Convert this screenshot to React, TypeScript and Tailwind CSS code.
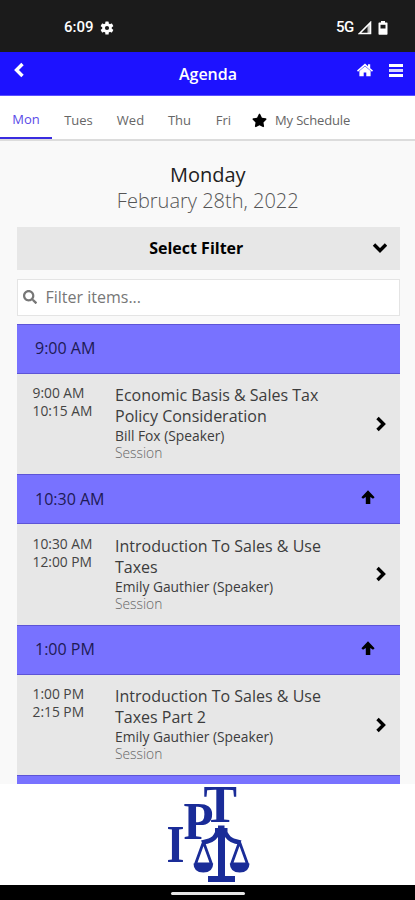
import { FaSearch, FaStar } from "react-icons/fa"

const days = [
  { label: "Mon", className: "w-[52px] border-b-2 border-[#3a2ce0] text-[#5a4ae8]" },
  { label: "Tues", className: "w-[53px] text-[#666]" },
  { label: "Wed", className: "w-[51px] text-[#666]" },
  { label: "Thu", className: "w-[47px] text-[#666]" },
  { label: "Fri", className: "w-[41px] text-[#666]" },
]

const sessions = [
  {
    start: "9:00 AM",
    end: "10:15 AM",
    title: ["Economic Basis & Sales Tax", "Policy Consideration"],
    speaker: "Bill Fox (Speaker)",
  },
  {
    start: "10:30 AM",
    end: "12:00 PM",
    title: ["Introduction To Sales & Use", "Taxes"],
    speaker: "Emily Gauthier (Speaker)",
  },
  {
    start: "1:00 PM",
    end: "2:15 PM",
    title: ["Introduction To Sales & Use", "Taxes Part 2"],
    speaker: "Emily Gauthier (Speaker)",
  },
]

function Chevron({ className, width = 3.6 }: { className: string; width?: number }) {
  return (
    <svg viewBox="0 0 16 16" className={className} fill="none" stroke="currentColor" strokeWidth={width}>
      <path d="M4.5 2 L10.5 8 L4.5 14" />
    </svg>
  )
}

function ArrowUp() {
  return (
    <svg viewBox="0 0 14 15" className="h-[15px] w-[14px]" fill="currentColor">
      <path d="M7 0.2 L13.6 7.2 L12 8.8 L9.3 7 V14 H4.8 V7 L2 8.8 L0.4 7.2 Z" />
    </svg>
  )
}

function HomeIcon() {
  return (
    <svg viewBox="0 0 16 14" className="h-[14px] w-4" fill="currentColor">
      <path d="M8 0.6 L11 3.3 V1.3 H13.2 V5.2 L16 7.6 L15 8.8 L8 2.8 L1 8.8 L0 7.6 Z" />
      <path d="M8 3.3 L13.6 8.1 V13.2 H9.3 V9.6 H6.7 V13.2 H2.4 V8.1 Z" />
    </svg>
  )
}

function GearIcon() {
  return (
    <svg viewBox="-7 -7 14 14" className="h-[14px] w-[14px]">
      <g fill="white">
        <rect x="-1.7" y="-6.5" width="3.4" height="13" rx="0.6" />
        <rect x="-1.7" y="-6.5" width="3.4" height="13" rx="0.6" transform="rotate(60)" />
        <rect x="-1.7" y="-6.5" width="3.4" height="13" rx="0.6" transform="rotate(120)" />
        <circle r="4.8" />
      </g>
      <circle r="2.1" fill="#1b1b1b" />
    </svg>
  )
}

function StatusBar() {
  return (
    <div className="flex h-[52px] shrink-0 items-center justify-between bg-[#1b1b1b] pt-[3px] pr-[27px] pl-16 text-white">
      <div className="flex items-center gap-[6px]">
        <span className="w-[30px] font-['Roboto'] text-[15px] font-medium">6:09</span>
        <GearIcon />
      </div>
      <div className="flex items-center">
        <span className="mr-[2px] w-5 font-['Roboto'] text-[15px] font-medium tracking-[-0.5px]">5G</span>
        <svg viewBox="0 0 14 14" className="mr-[6px] h-[14px] w-[14px]">
          <path d="M1.5 12.5 L12.5 1.5 V12.5 Z" fill="none" stroke="white" strokeWidth="1.6" />
          <path d="M9.5 5 L13 1 V13 H9.5 Z" fill="white" opacity="0.7" />
        </svg>
        <svg viewBox="0 0 10 14" className="h-[14px] w-[10px]">
          <path d="M3 0 H7 V1.5 H9 Q9.5 1.5 9.5 2.2 V13 Q9.5 13.8 8.8 13.8 H1.2 Q0.5 13.8 0.5 13 V2.2 Q0.5 1.5 1.2 1.5 H3 Z" fill="white" />
          <path d="M2.5 3.8 H7.5 V7.5 H2.5 Z" fill="#1b1b1b" />
        </svg>
      </div>
    </div>
  )
}

function Logo() {
  return (
    <svg viewBox="0 0 90 100" className="h-[100px] w-[90px] overflow-visible" fill="#1a2c98">
      <g fontFamily="Liberation Serif, serif" fontSize="53" fontWeight="bold">
        <text x="2.5" y="78" textLength="18" lengthAdjust="spacingAndGlyphs">I</text>
        <text x="19.5" y="54.5" textLength="30" lengthAdjust="spacingAndGlyphs">P</text>
        <text x="39.5" y="38" textLength="33.5" lengthAdjust="spacingAndGlyphs">T</text>
      </g>
      {/* Scales of justice */}
      <path d="M54 44 V41.5 H60.5 V44 H63.5 V48 Q66 53 70 54.5 L77.5 56.5 L75.5 60.5 Q66 60 61 53 V92 H71 V98 H44 V92 H54 V53 Q49 60 39 60.5 L37 56.5 L44.5 54.5 Q49 53 51 48 V44 Z" />
      <g fill="none" stroke="#1a2c98" strokeWidth="2.8" strokeLinejoin="round">
        <path d="M39.5 58 L31.5 80 H47.5 Z" />
        <path d="M75.5 58 L67.5 80 H83.5 Z" />
      </g>
      <path d="M29.5 79.5 H49.2 Q49 88.5 39.3 88.5 Q29.5 88.5 29.5 79.5 Z" />
      <path d="M65.8 79.5 H85.5 Q85.3 88.5 75.7 88.5 Q66 88.5 65.8 79.5 Z" />
    </svg>
  )
}

export default function App() {
  return (
    <div className="flex h-[900px] w-[415px] flex-col overflow-hidden bg-[#f9f9f9] font-['Open_Sans',sans-serif]">
      <StatusBar />

      {/* Header */}
      <header className="flex h-11 shrink-0 items-start justify-between border-b border-[#5a50ff] bg-[#1d12ff] text-white">
        <div className="w-[70px] pt-[9px] pl-[11px]">
          <Chevron className="h-[18px] w-4 rotate-180" width={3.4} />
        </div>
        <h1 className="pt-[10px] pl-px text-[16px] leading-6 font-semibold">Agenda</h1>
        <div className="flex w-[70px] items-center gap-4 pt-[11px] pl-[12px]">
          <HomeIcon />
          <div className="flex w-[14px] flex-col gap-[2px]">
            <div className="h-[3px] bg-white" />
            <div className="h-[3px] bg-[#d8d6ff]" />
            <div className="h-[3px] bg-white" />
          </div>
        </div>
      </header>

      {/* Day tabs */}
      <nav className="flex h-[45px] shrink-0 border-b-2 border-[#dcdcdc] bg-white text-[13px]">
        {days.map((day) => (
          <div key={day.label} className={`flex h-[43px] items-center justify-center pt-[6px] ${day.className}`}>
            {day.label}
          </div>
        ))}
        <div className="flex h-[43px] items-center gap-2 pt-[6px] pl-[8px] text-[#666]">
          <FaStar size={15} className="text-black" />
          <span className="tracking-[-0.15px]">My Schedule</span>
        </div>
      </nav>

      {/* Agenda */}
      <main className="flex h-[643px] shrink-0 flex-col overflow-hidden pt-[20px] pr-[15px] pl-[16.5px]">
        <div className="pr-px text-center">
          <h2 className="text-[20px] leading-[27px] text-[#222]">Monday</h2>
          <p className="text-[20px] leading-[26px] font-light text-[#555]">February 28th, 2022</p>
        </div>

        <button className="mt-[12.5px] flex h-[43.5px] shrink-0 items-center justify-between bg-[#e7e7e7] pr-3 text-black">
          <span className="w-3" />
          <span className="pr-[8px] text-[16px] font-bold">Select Filter</span>
          <Chevron className="h-4 w-4 rotate-90" width={3.4} />
        </button>

        <div className="mt-[8.5px] flex h-[37.5px] shrink-0 items-center gap-[9px] border border-[#e4e4e4] bg-white pl-[5px]">
          <FaSearch size={14} className="text-[#777]" />
          <span className="text-[16px] text-[#777]">Filter items...</span>
        </div>

        <div className="mt-[7.5px]">
          {sessions.map((session, index) => (
            <section key={session.start}>
              <div className="flex h-[50px] items-center justify-between border-y border-[#5d54d6] bg-[#7872ff] pr-[25px] pb-px pl-[18.5px] text-[16px] text-[#1e1a55]">
                <span>{session.start}</span>
                {index > 0 && (
                  <span className="pb-[2px] text-black">
                    <ArrowUp />
                  </span>
                )}
              </div>
              <div className="flex h-[100.6px] bg-[#e7e7e7] pt-[10.5px]">
                <div className="w-[98.5px] pl-4 text-[13.8px] leading-[18px] text-[#444]">
                  <p>{session.start}</p>
                  <p>{session.end}</p>
                </div>
                <div className="flex-1">
                  <h3 className="pt-px text-[16px] leading-[21px] text-[#3c3c3c]">
                    {session.title[0]}
                    <br />
                    {session.title[1]}
                  </h3>
                  <p className="text-[13.8px] leading-[17px] text-[#3c3c3c]">{session.speaker}</p>
                  <p className="text-[13.8px] leading-[18px] font-light text-[#666]">Session</p>
                </div>
                <div className="pt-[31.5px] pr-[11px] text-black">
                  <Chevron className="h-4 w-4" width={3.4} />
                </div>
              </div>
            </section>
          ))}
          <div className="h-[50px] border-t border-[#5d54d6] bg-[#7872ff]" />
        </div>
      </main>

      {/* Sponsor logo */}
      <footer className="flex h-[101px] shrink-0 justify-center bg-white pl-[3px]">
        <Logo />
      </footer>

      <div className="flex h-[15px] shrink-0 items-center justify-center bg-black pt-[2px]">
        <div className="h-[3px] w-[74px] rounded-full bg-[#e6e6e6]" />
      </div>
    </div>
  )
}
